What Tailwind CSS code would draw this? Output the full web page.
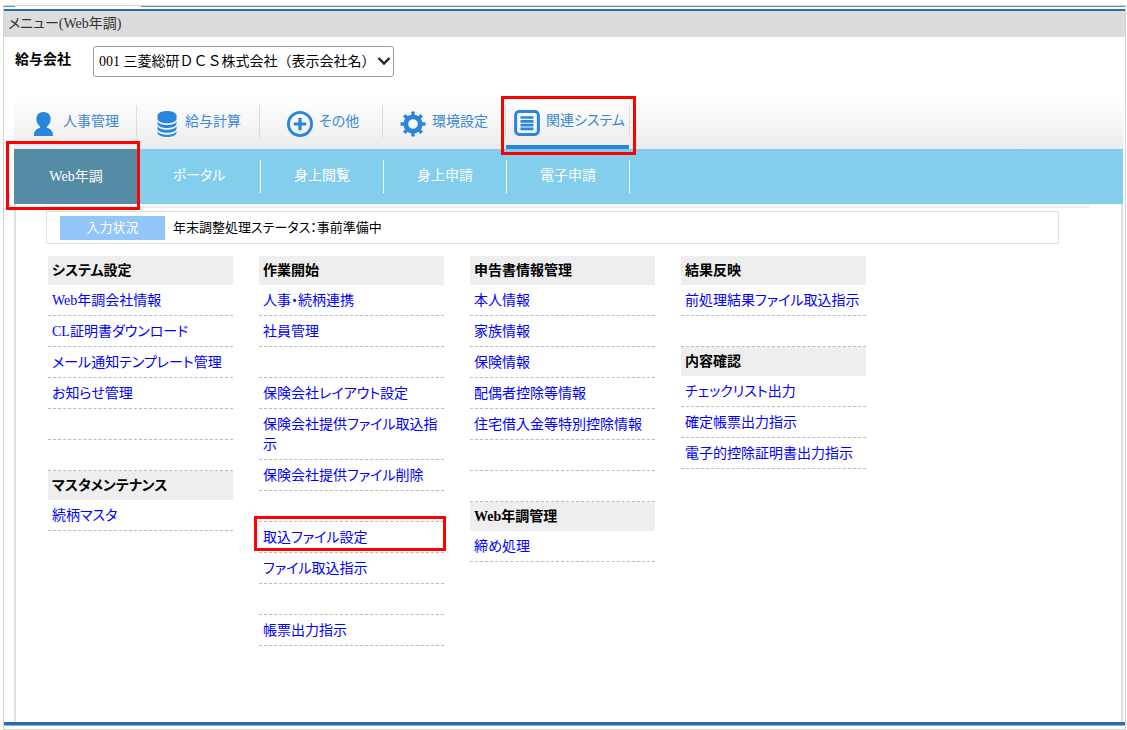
<!DOCTYPE html>
<html lang="ja">
<head>
<meta charset="utf-8">
<meta name="viewport" content="width=device-width, initial-scale=1">
<title>メニュー(Web年調)</title>
<script src="https://cdn.jsdelivr.net/npm/@tailwindcss/browser@4"></script>
</head>
<body class="flex min-h-screen flex-col bg-white pl-[3px] pr-px pt-[5px] font-['Liberation_Serif','Noto_Sans_CJK_JP',sans-serif] text-sm leading-5 text-black">
<div class="flex grow flex-col border border-[#d4d4d8]">
  <div class="flex h-[3px] shrink-0 justify-between">
    <span class="h-px w-[11px] bg-[#5d93c4]"></span>
    <span class="ml-[126px] h-px grow bg-[#5d93c4]"></span>
  </div>
  <header class="border-t-2 border-[#2c6ba6] bg-[#dcdcdc] px-1 py-[3px]">
    <h1 class="text-sm leading-5 text-[#333] [font-feature-settings:'palt']">メニュー(Web年調)</h1>
  </header>

  <div class="flex h-[61px] items-start px-[11px] pt-[9px]">
    <label for="company" class="w-[78px] pt-1 font-bold">給与会社</label>
    <div class="relative">
      <select id="company" class="h-[31px] w-[301px] appearance-none rounded-[3px] border border-[#999] bg-white pl-[5px] text-sm">
        <option>001 三菱総研ＤＣＳ株式会社（表示会社名）</option>
      </select>
      <svg class="pointer-events-none absolute right-[3px] top-[10px] h-[10px] w-[14px]" viewBox="0 0 14 10" fill="none" stroke="#222" stroke-width="2.4"><path d="M1.5 2 7 7.5 12.5 2"/></svg>
    </div>
  </div>

  <main class="ml-[10px] mr-[2px] flex grow flex-col">
    <nav aria-label="メイン" class="flex h-[51px] items-start bg-linear-to-b from-white to-[#ececec] text-[#3a87d8] [font-feature-settings:'palt']">
      <a href="#" class="mt-[7px] flex h-[33px] w-[123px] items-center border-r border-[#dcdcdc] pl-5">
        <svg class="mt-1 h-6 w-[19px]" viewBox="0 0 19 24" fill="#2a86db"><path d="M9.500 0C14 0 16.800 3 16.600 7.300 16.500 10.800 15 13 12.900 14.500v1.300c3.300.9 6.100 2.700 6.100 8.200H0C0 18.500 2.800 16.700 6.100 15.800v-1.300C4 13 2.500 10.800 2.400 7.300 2.200 3 5 0 9.500 0Z"/></svg>
        <span class="ml-[10px]">人事管理</span>
      </a>
      <a href="#" class="mt-[7px] flex h-[33px] w-[123px] items-center border-r border-[#dcdcdc] pl-5">
        <svg class="mt-1 h-[26px] w-5" viewBox="0 0 20 26" fill="#2a86db"><ellipse cx="10" cy="4.500" rx="9.500" ry="4.500"/><path d="M.5 4.500h19v3.700c-1.500 5.300-17.500 5.300-19 0Z"/><path d="M.5 10.300c1.500 5 17.500 5 19 0v2.700c-1.500 5.300-17.500 5.300-19 0Z"/><path d="M.5 15.100c1.500 5 17.500 5 19 0v2.700c-1.500 5.300-17.500 5.300-19 0Z"/><path d="M.5 19.900c1.500 5 17.500 5 19 0v2.100c-1.500 5.300-17.500 5.300-19 0Z"/></svg>
        <span class="ml-2">給与計算</span>
      </a>
      <a href="#" class="mt-[7px] flex h-[33px] w-[123px] items-center border-r border-[#dcdcdc] pl-[27px]">
        <svg class="mt-1 h-[26px] w-[26px]" viewBox="0 0 26 26" fill="none" stroke="#2a86db" stroke-width="2.800"><circle cx="13" cy="13" r="11.600"/><path d="M13 6.800v12.400M6.800 13h12.400" stroke-width="3.200"/></svg>
        <span class="ml-[6px]">その他</span>
      </a>
      <a href="#" class="mt-[7px] flex h-[33px] w-[123px] items-center border-r border-[#dcdcdc] pl-[17px]">
        <svg class="mt-1 h-[26px] w-[26px]" viewBox="0 0 26 26" fill="none" stroke="#2a86db"><circle cx="13" cy="13" r="7.200" stroke-width="4.800"/><path d="M13 .5v4M13 21.500v4M.5 13h4M21.500 13h4M4.200 4.200 7 7M19 19l2.800 2.800M4.200 21.800 7 19M19 7l2.800-2.800" stroke-width="3.400"/></svg>
        <span class="ml-[6px]">環境設定</span>
      </a>
      <a href="#" aria-current="page" class="relative flex h-[51px] w-[123px] items-start border-b-4 border-[#2a86db] pl-2">
        <svg class="mt-3 h-[26px] w-[26px]" viewBox="0 0 26 26" fill="none" stroke="#2a86db"><rect x="1.600" y="1.600" width="22.800" height="22.800" rx="3.600" stroke-width="3"/><path d="M6.500 7.500h13M6.500 11.300h13M6.500 15.100h13M6.500 18.900h13" stroke-width="2.700"/></svg>
        <span class="ml-[6px] mt-[13px]">関連システム</span>
        <span class="absolute -bottom-[10px] -left-[5px] -right-[7px] -top-[2px] z-10 border-[3px] border-[#f00]"></span>
      </a>
      <span class="mt-[7px] h-[33px] w-px bg-[#dcdcdc]"></span>
    </nav>

    <nav aria-label="サブ" class="flex h-[55px] items-center bg-[#83ceec] text-center text-white [font-feature-settings:'palt']">
      <a href="#" aria-current="page" class="relative flex h-full w-[124px] items-center justify-center bg-[#548ca6]">Web年調
        <span class="absolute -bottom-[6px] -left-2 -right-[2px] -top-2 border-[3px] border-[#f00]"></span>
      </a>
      <a href="#" class="h-[33px] w-[123px] border-r border-white leading-8">ポータル</a>
      <a href="#" class="h-[33px] w-[123px] border-r border-white leading-8">身上閲覧</a>
      <a href="#" class="h-[33px] w-[123px] border-r border-white leading-8">身上申請</a>
      <a href="#" class="h-[33px] w-[123px] border-r border-white leading-8">電子申請</a>
    </nav>

    <section class="grow border-x-2 border-[#dfdfdf] pl-[30px] pr-8 pt-[2px] [font-feature-settings:'palt']">
      <hr class="border-t-2 border-[#ececec]">
      <div class="mr-[30px] mt-[3px] flex h-[33px] items-center border border-[#e2e2e2] pl-[13px] text-[13px]">
        <span class="h-6 w-[105px] bg-[#92c5f8] text-center leading-6 text-white">入力状況</span>
        <span class="ml-2">年末調整処理ステータス：事前準備中</span>
      </div>

      <div class="ml-[2px] mt-3 flex gap-[26px]">
        <div class="w-[185px]">
          <h2 class="h-[29px] bg-[#eee] px-1 font-bold leading-[29px]">システム設定</h2>
          <ul class="*:min-h-[31px] *:border-b *:border-dashed *:border-[#bbb] *:px-1 *:pt-[6px] *:pb-1 text-[#00f]">
            <li><a href="#">Web年調会社情報</a></li>
            <li><a href="#">CL証明書ダウンロード</a></li>
            <li><a href="#">メール通知テンプレート管理</a></li>
            <li><a href="#">お知らせ管理</a></li>
            <li></li>
            <li></li>
          </ul>
          <h2 class="h-[29px] bg-[#eee] px-1 font-bold leading-[29px]">マスタメンテナンス</h2>
          <ul class="*:min-h-[31px] *:border-b *:border-dashed *:border-[#bbb] *:px-1 *:pt-[6px] *:pb-1 text-[#00f]">
            <li><a href="#">続柄マスタ</a></li>
          </ul>
        </div>
        <div class="w-[185px]">
          <h2 class="h-[29px] bg-[#eee] px-1 font-bold leading-[29px]">作業開始</h2>
          <ul class="*:min-h-[31px] *:border-b *:border-dashed *:border-[#bbb] *:px-1 *:pt-[6px] *:pb-1 text-[#00f]">
            <li><a href="#">人事・続柄連携</a></li>
            <li><a href="#">社員管理</a></li>
            <li></li>
            <li><a href="#">保険会社レイアウト設定</a></li>
            <li><a href="#">保険会社提供ファイル取込指示</a></li>
            <li><a href="#">保険会社提供ファイル削除</a></li>
            <li></li>
            <li class="relative"><a href="#">取込ファイル設定</a><span class="absolute -left-[5px] -right-[2px] -top-[6px] bottom-px border-[3px] border-[#f00]"></span></li>
            <li><a href="#">ファイル取込指示</a></li>
            <li></li>
            <li><a href="#">帳票出力指示</a></li>
          </ul>
        </div>
        <div class="w-[185px]">
          <h2 class="h-[29px] bg-[#eee] px-1 font-bold leading-[29px]">申告書情報管理</h2>
          <ul class="*:min-h-[31px] *:border-b *:border-dashed *:border-[#bbb] *:px-1 *:pt-[6px] *:pb-1 text-[#00f]">
            <li><a href="#">本人情報</a></li>
            <li><a href="#">家族情報</a></li>
            <li><a href="#">保険情報</a></li>
            <li><a href="#">配偶者控除等情報</a></li>
            <li><a href="#">住宅借入金等特別控除情報</a></li>
            <li></li>
            <li></li>
          </ul>
          <h2 class="h-[29px] bg-[#eee] px-1 font-bold leading-[29px]">Web年調管理</h2>
          <ul class="*:min-h-[31px] *:border-b *:border-dashed *:border-[#bbb] *:px-1 *:pt-[6px] *:pb-1 text-[#00f]">
            <li><a href="#">締め処理</a></li>
          </ul>
        </div>
        <div class="w-[185px]">
          <h2 class="h-[29px] bg-[#eee] px-1 font-bold leading-[29px]">結果反映</h2>
          <ul class="*:min-h-[31px] *:border-b *:border-dashed *:border-[#bbb] *:px-1 *:pt-[6px] *:pb-1 text-[#00f]">
            <li><a href="#">前処理結果ファイル取込指示</a></li>
            <li></li>
          </ul>
          <h2 class="h-[29px] bg-[#eee] px-1 font-bold leading-[29px]">内容確認</h2>
          <ul class="*:min-h-[31px] *:border-b *:border-dashed *:border-[#bbb] *:px-1 *:pt-[6px] *:pb-1 text-[#00f]">
            <li><a href="#">チェックリスト出力</a></li>
            <li><a href="#">確定帳票出力指示</a></li>
            <li><a href="#">電子的控除証明書出力指示</a></li>
          </ul>
        </div>
      </div>
    </section>
  </main>
  <footer class="mb-[3px] h-1 border-b border-[#8db8dc] bg-[#2c6ba6]"></footer>
</div>
</body>
</html>
